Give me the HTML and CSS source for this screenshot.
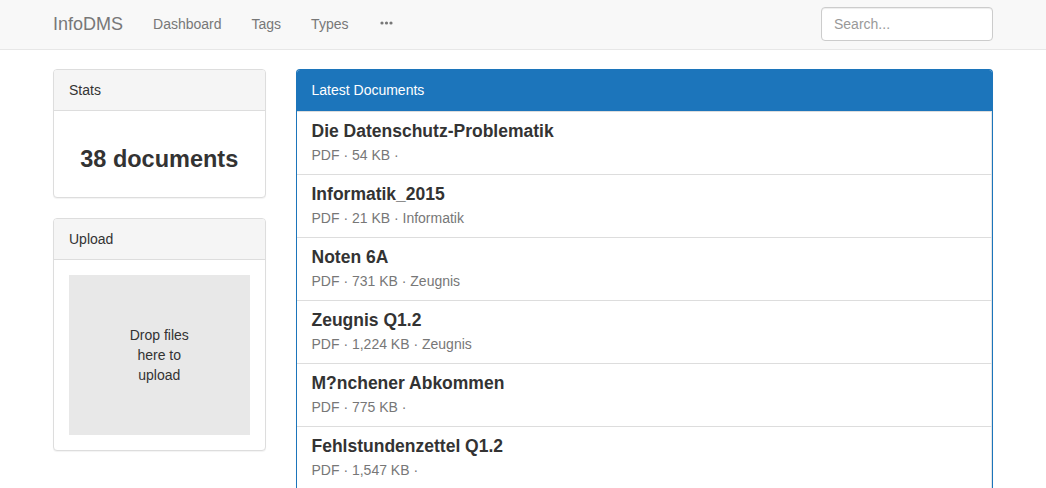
FILE: index.html
```html
<!DOCTYPE html>
<html>
<head>
<meta charset="utf-8">
<title>InfoDMS</title>
<link rel="stylesheet" href="styles.css">
</head>
<body>
<nav class="navbar">
  <div class="container nav-inner">
    <a class="brand" href="#">InfoDMS</a>
    <ul class="nav">
      <li><a href="#">Dashboard</a></li>
      <li><a href="#">Tags</a></li>
      <li><a href="#">Types</a></li>
      <li><a href="#" class="more"><svg width="13" height="4" viewBox="0 0 13 4"><circle cx="2" cy="2" r="1.6" fill="#777"/><circle cx="6.5" cy="2" r="1.6" fill="#777"/><circle cx="11" cy="2" r="1.6" fill="#777"/></svg></a></li>
    </ul>
    <form class="search">
      <input type="text" placeholder="Search...">
    </form>
  </div>
</nav>
<div class="container main">
  <div class="col-side">
    <div class="panel">
      <div class="panel-heading">Stats</div>
      <div class="panel-body">
        <h2 class="stat">38 documents</h2>
      </div>
    </div>
    <div class="panel">
      <div class="panel-heading">Upload</div>
      <div class="panel-body">
        <div class="dropzone"><span>Drop files here to upload</span></div>
      </div>
    </div>
  </div>
  <div class="col-main">
    <div class="panel panel-primary">
      <div class="panel-heading">Latest Documents</div>
      <div class="list-group">
        <a class="item" href="#"><h4>Die Datenschutz-Problematik</h4><p>PDF · 54 KB · </p></a>
        <a class="item" href="#"><h4>Informatik_2015</h4><p>PDF · 21 KB · Informatik</p></a>
        <a class="item" href="#"><h4>Noten 6A</h4><p>PDF · 731 KB · Zeugnis</p></a>
        <a class="item" href="#"><h4>Zeugnis Q1.2</h4><p>PDF · 1,224 KB · Zeugnis</p></a>
        <a class="item" href="#"><h4>M?nchener Abkommen</h4><p>PDF · 775 KB · </p></a>
        <a class="item" href="#"><h4>Fehlstundenzettel Q1.2</h4><p>PDF · 1,547 KB · </p></a>
      </div>
    </div>
  </div>
</div>
</body>
</html>
```
FILE: styles.css
```css
* { box-sizing: border-box; }
html, body { margin: 0; padding: 0; }
body {
  font-family: "Liberation Sans", Arial, sans-serif;
  font-size: 14px;
  line-height: 20px;
  color: #333;
  background: #fff;
}
a { text-decoration: none; color: inherit; }
.container {
  width: 970px;
  margin: 0 auto;
  padding: 0 15px;
}
.navbar {
  height: 50px;
  background: #f8f8f8;
  border-bottom: 1px solid #e7e7e7;
  margin-bottom: 19px;
}
.nav-inner {
  display: flex;
  align-items: flex-start;
  height: 49px;
}
.brand {
  font-size: 18px;
  line-height: 20px;
  color: #777;
  padding: 14px 15px 15px 0;
}
.nav {
  list-style: none;
  margin: 0;
  padding: 0;
  display: flex;
}
.nav a {
  display: block;
  padding: 14px 15px 15px;
  color: #777;
  font-size: 14px;
  line-height: 20px;
}
.nav a.more {
  display: flex;
  align-items: center;
  height: 49px;
  padding: 0 15px 4px 17px;
}
.search {
  margin: 7px 0 0 auto;
}
.search input {
  width: 172px;
  height: 34px;
  padding: 6px 12px;
  border: 1px solid #ccc;
  border-radius: 4px;
  font-family: inherit;
  font-size: 14px;
  color: #555;
  background: #fff;
  box-shadow: inset 0 1px 1px rgba(0,0,0,0.075);
}
.search input::placeholder { color: #999; }
.main {
  display: flex;
  gap: 30px;
}
.col-side { width: 212.5px; flex: none; }
.col-main { flex: 1; min-width: 0; }
.panel {
  border: 1px solid #ddd;
  border-radius: 4px;
  margin-bottom: 20px;
  background: #fff;
  box-shadow: 0 1px 1px rgba(0,0,0,0.05);
}
.panel-heading {
  padding: 10px 15px;
  background: #f5f5f5;
  border-bottom: 1px solid #ddd;
  border-radius: 3px 3px 0 0;
  color: #333;
}
.panel-body { padding: 15px; }
.stat {
  margin: 20px 0 10px;
  font-size: 23.5px;
  font-weight: bold;
  line-height: 26px;
  text-align: center;
  color: #333;
}
.dropzone {
  height: 160px;
  background: #e8e8e8;
  display: flex;
  align-items: center;
  justify-content: center;
  text-align: center;
}
.dropzone span { width: 76px; }
.panel-primary {
  border-color: #1c75bb;
  border-bottom: 0;
  border-radius: 4px 4px 0 0;
}
.panel-primary .panel-heading {
  background: #1c75bb;
  border-color: #1c75bb;
  color: #fff;
  padding: 10px 15px 10px;
}
.item {
  display: block;
  padding: 9px 15px 9px;
  border-top: 1px solid #ddd;
  border-right: 1px solid #e4e4e4;
}
.item h4 {
  margin: 0 0 4px;
  font-size: 17.5px;
  font-weight: bold;
  line-height: 20px;
  color: #333;
}
.item p {
  margin: 0;
  color: #777;
  font-size: 14px;
  line-height: 20px;
}
```
